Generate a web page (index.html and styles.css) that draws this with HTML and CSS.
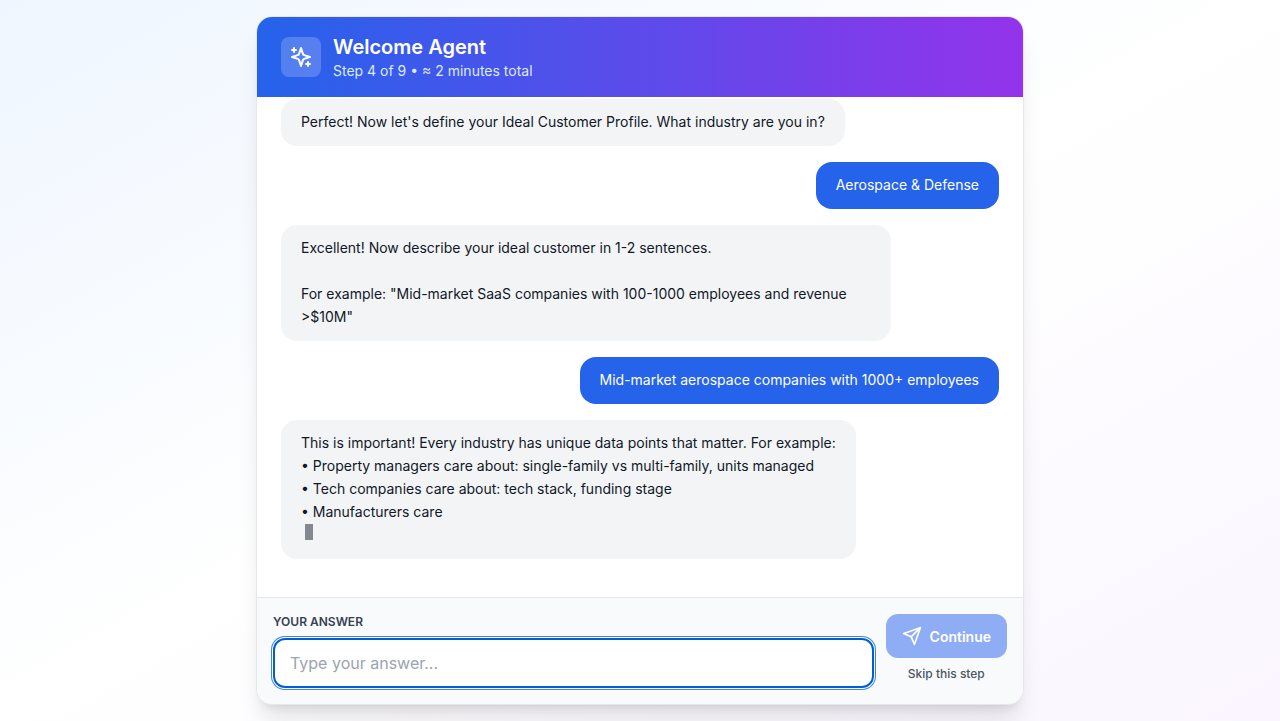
FILE: index.html
```html
<!DOCTYPE html>
<html lang="en">
<head>
<meta charset="utf-8">
<meta name="viewport" content="width=device-width, initial-scale=1">
<title>Welcome Agent</title>
<link rel="stylesheet" href="styles.css">
</head>
<body>
<main class="card">
  <header class="header">
    <div class="badge">
      <svg class="icon" viewBox="0 0 24 24" aria-hidden="true"><path d="m12 3-1.912 5.813a2 2 0 0 1-1.275 1.275L3 12l5.813 1.912a2 2 0 0 1 1.275 1.275L12 21l1.912-5.813a2 2 0 0 1 1.275-1.275L21 12l-5.813-1.912a2 2 0 0 1-1.275-1.275L12 3Z"/><path d="M5 3v4M3 5h4M19 17v4M17 19h4"/></svg>
    </div>
    <div>
      <h1 class="title">Welcome Agent</h1>
      <p class="subtitle">Step 4 of 9 • ≈ 2 minutes total</p>
    </div>
  </header>
  <section class="messages">
    <div class="bubble agent">Perfect! Now let's define your Ideal Customer Profile. What industry are you in?</div>
    <div class="bubble user">Aerospace &amp; Defense</div>
    <div class="bubble agent">Excellent! Now describe your ideal customer in 1-2 sentences.

For example: "Mid-market SaaS companies with 100-1000 employees and revenue &gt;$10M"</div>
    <div class="bubble user">Mid-market aerospace companies with 1000+ employees</div>
    <div class="bubble agent">This is important! Every industry has unique data points that matter. For example:
• Property managers care about: single-family vs multi-family, units managed
• Tech companies care about: tech stack, funding stage
• Manufacturers care
<span class="cursor"></span></div>
  </section>
  <form class="footer">
    <div class="field">
      <label class="label" for="answer">Your answer</label>
      <input class="input" id="answer" type="text" placeholder="Type your answer...">
    </div>
    <div class="actions">
      <button class="continue" type="submit" disabled>
        <svg class="icon send" viewBox="0 0 24 24" aria-hidden="true"><path d="m22 2-7 20-4-9-9-4Z"/><path d="M22 2 11 13"/></svg>
        Continue
      </button>
      <button class="skip" type="button">Skip this step</button>
    </div>
  </form>
</main>
</body>
</html>
```
FILE: styles.css
```css
* { box-sizing: border-box; }
body {
  margin: 0;
  min-height: 100vh;
  padding: 16px;
  display: flex;
  justify-content: center;
  font-family: Inter, "Liberation Sans", sans-serif;
  color: #111827;
  background: linear-gradient(to bottom right, #eff6ff, #ffffff, #faf5ff);
}
.card {
  width: 100%;
  max-width: 768px;
  display: flex;
  flex-direction: column;
  overflow: hidden;
  background: #ffffff;
  border: 1px solid #e5e7eb;
  border-radius: 16px;
  box-shadow: 0 20px 25px -5px rgba(0, 0, 0, 0.1), 0 8px 10px -6px rgba(0, 0, 0, 0.1);
}
.header {
  display: flex;
  align-items: center;
  gap: 12px;
  padding: 16px 24px;
  color: #ffffff;
  background: linear-gradient(to right, #2563eb, #9333ea);
}
.badge {
  display: flex;
  align-items: center;
  justify-content: center;
  width: 40px;
  height: 40px;
  border-radius: 8px;
  background: rgba(255, 255, 255, 0.2);
}
.icon {
  width: 24px;
  height: 24px;
  fill: none;
  stroke: currentColor;
  stroke-width: 2;
  stroke-linecap: round;
  stroke-linejoin: round;
}
.title { margin: 0; font-size: 20px; line-height: 28px; font-weight: 600; }
.subtitle { margin: 0; font-size: 14px; line-height: 20px; color: #dbeafe; }
.messages {
  flex: 1;
  display: flex;
  flex-direction: column;
  align-items: flex-start;
  gap: 16px;
  padding: 2px 24px 24px;
}
.bubble {
  max-width: 85%;
  padding: 11px 20px 13px;
  border-radius: 16px;
  font-size: 14px;
  line-height: 23px;
  white-space: pre-wrap;
}
.agent { background: #f3f4f6; }
.user { align-self: flex-end; background: #2563eb; color: #ffffff; }
.cursor { display: inline-block; width: 8px; height: 16px; margin-left: 4px; background: #838790; }
.footer {
  display: flex;
  gap: 12px;
  padding: 16px;
  border-top: 1px solid #e5e7eb;
  background: #f9fafb;
}
.field { flex: 1; display: flex; flex-direction: column; gap: 8px; }
.label { font-size: 12px; line-height: 16px; font-weight: 600; text-transform: uppercase; color: #374151; }
.input {
  width: 100%;
  height: 50px;
  padding: 12px 15px;
  font: inherit;
  font-size: 16px;
  border: 2px solid #0060d0;
  border-radius: 12px;
  background: #ffffff;
  box-shadow: 0 0 0 1px #ffffff, 0 0 0 2px #3b82f6;
}
.input:focus { outline: none; }
.input::placeholder { color: #9ca3af; }
.actions { display: flex; flex-direction: column; gap: 8px; }
.continue {
  display: flex;
  align-items: center;
  gap: 8px;
  height: 44px;
  padding: 0 16px;
  border: 0;
  border-radius: 12px;
  font: inherit;
  font-size: 14px;
  font-weight: 600;
  color: #ffffff;
  background: #8fadf5;
}
.send { width: 20px; height: 20px; }
.skip { padding: 0; border: 0; background: none; font: inherit; font-size: 12px; line-height: 16px; font-weight: 500; color: #4b5563; }
```
